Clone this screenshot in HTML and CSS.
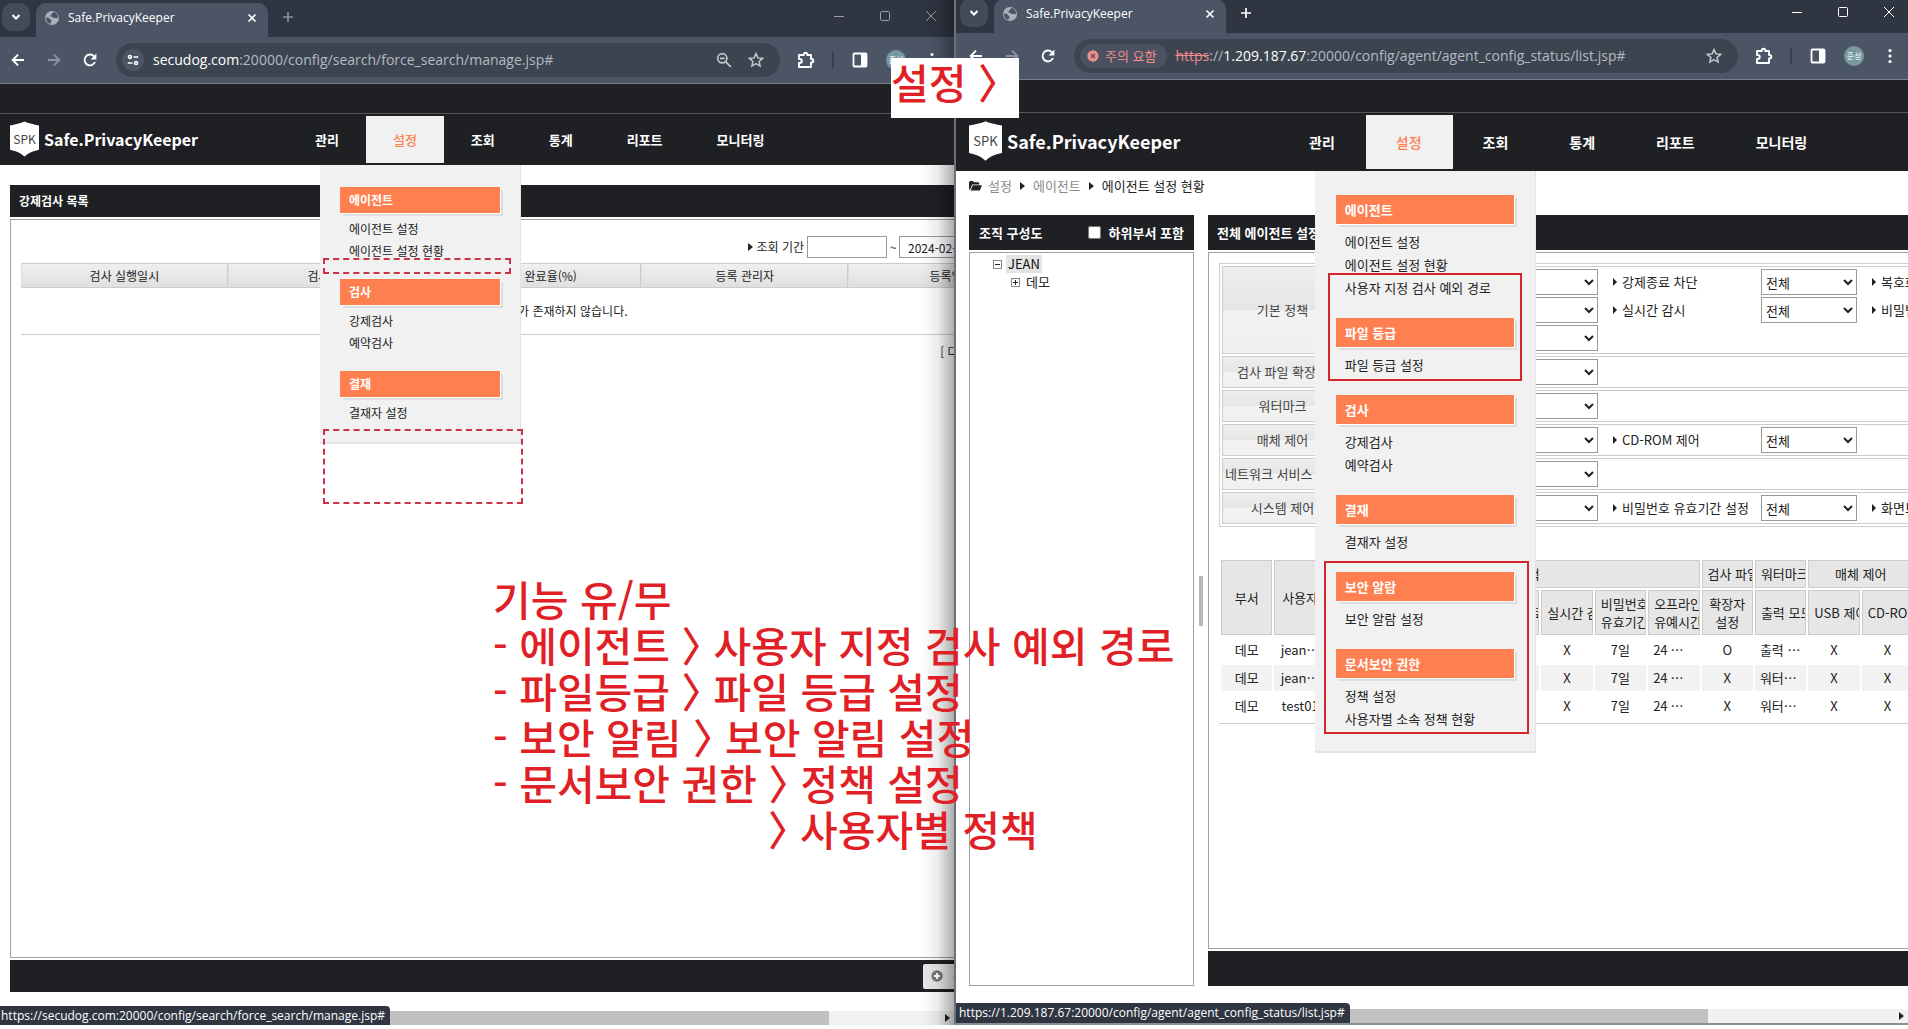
FILE: index.html
```html
<!DOCTYPE html>
<html lang="ko">
<head>
<meta charset="utf-8">
<title>Safe.PrivacyKeeper</title>
<link rel="stylesheet" href="styles.css">
</head>
<body>
<svg class="sprite" aria-hidden="true">
  <symbol id="chev" viewBox="0 0 16 16"><path d="M4.500 6l3.500 3.500L11.500 6" fill="none" stroke="currentColor" stroke-width="2"/></symbol>
  <symbol id="globe" viewBox="0 0 16 16"><circle cx="8" cy="8" r="7" fill="#aab0b9"/><path d="M2.500 7.500c1.500 0 3 .5 3.500 1.500s1.500 1 1.500 2S6 13 6.500 14C3.500 13.500 2 11 2 8.500zM8.500 3c-1 .5-.5 1.500-1.500 2s-1.500 1-.5 1.500 2 0 2.500 1 1.500.5 2.500.5 2 .5 2.500-.5c.3-2.500-1.500-5-4-5.500-.5 0-1 .500-1.500 1z" fill="#4c5566"/></symbol>
  <symbol id="close" viewBox="0 0 16 16"><path d="M4.500 4.500l7 7m0-7l-7 7" stroke="currentColor" stroke-width="1.600"/></symbol>
  <symbol id="plus" viewBox="0 0 16 16"><path d="M8 3v10M3 8h10" stroke="currentColor" stroke-width="1.700"/></symbol>
  <symbol id="min" viewBox="0 0 16 16"><path d="M3 8.500h10" stroke="currentColor"/></symbol>
  <symbol id="max" viewBox="0 0 16 16"><rect x="3.500" y="3.500" width="9" height="9" rx="1" fill="none" stroke="currentColor"/></symbol>
  <symbol id="x" viewBox="0 0 16 16"><path d="M3 3l10 10m0-10L3 13" stroke="currentColor"/></symbol>
  <symbol id="back" viewBox="0 0 16 16"><path d="M14 8H3m5-5.300L2.700 8 8 13.300" fill="none" stroke="currentColor" stroke-width="1.900"/></symbol>
  <symbol id="fwd" viewBox="0 0 16 16"><path d="M2 8h11M8 2.700L13.300 8 8 13.300" fill="none" stroke="currentColor" stroke-width="1.900"/></symbol>
  <symbol id="reload" viewBox="0 0 16 16"><path d="M13 10A5.400 5.400 0 1 1 12 4.300L13.500 6" fill="none" stroke="currentColor" stroke-width="1.900"/><path d="M14.400 1.500v6H8.500z" fill="currentColor"/></symbol>
  <symbol id="tune" viewBox="0 0 16 16"><g fill="none" stroke="currentColor" stroke-width="1.700"><circle cx="4.500" cy="4.500" r="1.700"/><path d="M8.500 4.500H14M2 11.500h5.500"/><circle cx="11.500" cy="11.500" r="1.700"/></g></symbol>
  <symbol id="zoomout" viewBox="0 0 16 16"><g fill="none" stroke="currentColor" stroke-width="1.700"><circle cx="6.300" cy="6.300" r="4.600"/><path d="M9.800 9.800l5 5M4 6.300h4.600"/></g></symbol>
  <symbol id="star" viewBox="0 0 16 16"><path d="M8 1.600l1.900 4.300 4.700.5-3.500 3.100 1 4.600L8 11.700l-4.100 2.400 1-4.600L1.400 6.400l4.700-.5z" fill="none" stroke="currentColor" stroke-width="1.500"/></symbol>
  <symbol id="puzzle" viewBox="0 0 18 18"><path d="M2 4h4.800v-.6a1.700 1.700 0 0 1 3.400 0V4H14v4h.6a1.700 1.700 0 0 1 0 3.400H14V16H2v-4h.8a2 2 0 0 0 0-4H2z" fill="none" stroke="currentColor" stroke-width="1.900" stroke-linejoin="round"/></symbol>
  <symbol id="side" viewBox="0 0 16 16"><rect x="1.500" y="1.500" width="13" height="13" rx="1" fill="none" stroke="currentColor" stroke-width="1.800"/><path d="M9 1h6v14H9z" fill="currentColor"/></symbol>
  <symbol id="dots" viewBox="0 0 16 16"><g fill="currentColor"><circle cx="8" cy="2.500" r="1.600"/><circle cx="8" cy="8" r="1.600"/><circle cx="8" cy="13.500" r="1.600"/></g></symbol>
  <symbol id="warn" viewBox="0 0 12 12"><circle cx="6" cy="6" r="5.700" fill="#f28b8f"/><path d="M4 4l4 4m0-4L4 8" stroke="#4a5160" stroke-width="1.300"/></symbol>
  <symbol id="shield" viewBox="0 0 30 36"><path d="M15 0c4 2 10 3 15 4v25c-5 1-11 3-15 7-4-4-10-6-15-7V4c5-1 11-2 15-4z" fill="#fff"/></symbol>
  <symbol id="tri" viewBox="0 0 5 8"><path d="M0 0l5 4-5 4z" fill="currentColor"/></symbol>
  <symbol id="folder" viewBox="0 0 13 10"><path d="M0 8.500V1.200L1 0h3l1 1.300h4.500l.8 1V3.500H3.200L1 8.500zM3.800 4.200H13L10.800 9.500H1.500z" fill="currentColor"/></symbol>
  <symbol id="add" viewBox="0 0 12 12"><circle cx="6" cy="6" r="5.700" fill="#777"/><path d="M6 3v6M3 6h6" stroke="#fff" stroke-width="2"/></symbol>
</svg>

<div class="desktop">
<!-- Background window -->
<section class="window back-window">
  <div class="titlebar">
    <button class="tab-search" aria-label="탭 검색"><svg><use href="#chev"/></svg></button>
    <div class="tab"><svg><use href="#globe"/></svg><span class="tab-title">Safe.PrivacyKeeper</span><button class="icon-btn small" aria-label="탭 닫기"><svg><use href="#close"/></svg></button></div>
    <button class="icon-btn new-tab" aria-label="새 탭"><svg><use href="#plus"/></svg></button>
    <div class="controls"><svg><use href="#min"/></svg><svg><use href="#max"/></svg><svg><use href="#x"/></svg></div>
  </div>
  <div class="toolbar">
    <button class="icon-btn" aria-label="뒤로"><svg><use href="#back"/></svg></button>
    <button class="icon-btn off" aria-label="앞으로"><svg><use href="#fwd"/></svg></button>
    <button class="icon-btn" aria-label="새로고침"><svg><use href="#reload"/></svg></button>
    <div class="omnibox">
      <span class="site-info"><svg><use href="#tune"/></svg></span>
      <span class="url"><b>secudog.com</b>:20000/config/search/force_search/manage.jsp#</span>
      <button class="icon-btn small" aria-label="축소"><svg><use href="#zoomout"/></svg></button>
      <button class="icon-btn small" aria-label="북마크"><svg><use href="#star"/></svg></button>
    </div>
    <button class="icon-btn big" aria-label="확장 프로그램"><svg><use href="#puzzle"/></svg></button>
    <i class="divider"></i>
    <button class="icon-btn" aria-label="측면 패널"><svg><use href="#side"/></svg></button>
    <button class="icon-btn" aria-label="프로필"><span class="avatar">준성</span></button>
    <button class="icon-btn" aria-label="메뉴"><svg><use href="#dots"/></svg></button>
  </div>
  <div class="topline"></div>
  <header class="site-head">
    <a class="logo" href="#"><span class="shield"><svg><use href="#shield"/></svg><span>SPK</span></span><span>Safe.PrivacyKeeper</span></a>
    <nav><ul class="nav">
      <li><a href="#">관리</a></li>
      <li class="active"><a href="#">설정</a>
        <div class="menu">
          <h3>에이전트</h3><a href="#">에이전트 설정</a><a href="#">에이전트 설정 현황</a>
          <h3>검사</h3><a href="#">강제검사</a><a href="#">예약검사</a>
          <h3>결재</h3><a href="#">결재자 설정</a>
        </div>
      </li>
      <li><a href="#">조회</a></li><li><a href="#">통계</a></li><li><a href="#">리포트</a></li><li><a href="#">모니터링</a></li>
    </ul></nav>
  </header>
  <main class="scan-page">
    <h2 class="bar">강제검사 목록</h2>
    <div class="panel scan-panel">
      <form class="search">
        <svg class="tri"><use href="#tri"/></svg><label for="from">조회 기간</label>
        <input id="from" type="text"><span>~</span><input type="text" value="2024-02-21" aria-label="종료일">
        <button type="button">조회</button>
      </form>
      <table class="scan-table">
        <thead><tr><th>검사 실행일시</th><th>검사 이름</th><th>검사 완료율(%)</th><th>등록 관리자</th><th>등록일시</th></tr></thead>
        <tbody><tr><td colspan="5">조회된 데이터가 존재하지 않습니다.</td></tr></tbody>
      </table>
      <p class="export">[ 다운로드 가능 건수 ]</p>
    </div>
    <div class="bar foot"><button class="add-btn"><svg><use href="#add"/></svg>신규 등록</button></div>
  </main>
  <div class="hscroll"><i class="thumb"></i><svg class="tri"><use href="#tri"/></svg></div>
  <div class="status">https://secudog.com:20000/config/search/force_search/manage.jsp#</div>
</section>

<!-- Foreground window -->
<section class="window front-window">
  <div class="titlebar">
    <button class="tab-search" aria-label="탭 검색"><svg><use href="#chev"/></svg></button>
    <div class="tab"><svg><use href="#globe"/></svg><span class="tab-title">Safe.PrivacyKeeper</span><button class="icon-btn small" aria-label="탭 닫기"><svg><use href="#close"/></svg></button></div>
    <button class="icon-btn new-tab" aria-label="새 탭"><svg><use href="#plus"/></svg></button>
    <div class="controls"><svg><use href="#min"/></svg><svg><use href="#max"/></svg><svg><use href="#x"/></svg></div>
  </div>
  <div class="toolbar">
    <button class="icon-btn" aria-label="뒤로"><svg><use href="#back"/></svg></button>
    <button class="icon-btn off" aria-label="앞으로"><svg><use href="#fwd"/></svg></button>
    <button class="icon-btn" aria-label="새로고침"><svg><use href="#reload"/></svg></button>
    <div class="omnibox">
      <span class="warning"><svg><use href="#warn"/></svg>주의 요함</span>
      <span class="url"><s>https</s>://<b>1.209.187.67</b>:20000/config/agent/agent_config_status/list.jsp#</span>
      <button class="icon-btn small" aria-label="북마크"><svg><use href="#star"/></svg></button>
    </div>
    <button class="icon-btn big" aria-label="확장 프로그램"><svg><use href="#puzzle"/></svg></button>
    <i class="divider"></i>
    <button class="icon-btn" aria-label="측면 패널"><svg><use href="#side"/></svg></button>
    <button class="icon-btn" aria-label="프로필"><span class="avatar">준성</span></button>
    <button class="icon-btn" aria-label="메뉴"><svg><use href="#dots"/></svg></button>
  </div>
  <div class="topline"></div>
  <header class="site-head">
    <a class="logo" href="#"><span class="shield"><svg><use href="#shield"/></svg><span>SPK</span></span><span>Safe.PrivacyKeeper</span></a>
    <nav><ul class="nav">
      <li><a href="#">관리</a></li>
      <li class="active"><a href="#">설정</a>
        <div class="menu">
          <h3>에이전트</h3><a href="#">에이전트 설정</a><a href="#">에이전트 설정 현황</a><a href="#">사용자 지정 검사 예외 경로</a>
          <h3>파일 등급</h3><a href="#">파일 등급 설정</a>
          <h3>검사</h3><a href="#">강제검사</a><a href="#">예약검사</a>
          <h3>결재</h3><a href="#">결재자 설정</a>
          <h3>보안 알람</h3><a href="#">보안 알람 설정</a>
          <h3>문서보안 권한</h3><a href="#">정책 설정</a><a href="#">사용자별 소속 정책 현황</a>
        </div>
      </li>
      <li><a href="#">조회</a></li><li><a href="#">통계</a></li><li><a href="#">리포트</a></li><li><a href="#">모니터링</a></li>
    </ul></nav>
  </header>
  <div class="crumbs"><svg class="folder"><use href="#folder"/></svg><a href="#">설정</a><svg class="tri"><use href="#tri"/></svg><a href="#">에이전트</a><svg class="tri"><use href="#tri"/></svg><span>에이전트 설정 현황</span></div>
  <main class="agent-page">
    <aside class="org">
      <div class="bar"><span>조직 구성도</span><label><input type="checkbox">하위부서 포함</label></div>
      <div class="panel tree">
        <div class="node"><i class="box"></i><span class="picked">JEAN</span></div>
        <div class="node child"><i class="box more"></i><span>데모</span></div>
      </div>
    </aside>
    <div class="splitter"><i></i></div>
    <section class="status-list">
      <h2 class="bar">전체 에이전트 설정 현황</h2>
      <div class="panel list-panel">
        <div class="filters">
          <div class="frow"><div class="fname">기본 정책</div><div class="fields">
            <label for="f1">삭제 차단</label><select id="f1"><option>전체</option></select>
            <label for="f2">강제종료 차단</label><select id="f2"><option>전체</option></select>
            <label for="f3">복호화 권한</label><select id="f3"><option>전체</option></select>
            <label for="f4">자동 검사</label><select id="f4"><option>전체</option></select>
            <label for="f5">실시간 감시</label><select id="f5"><option>전체</option></select>
            <label for="f6">비밀번호</label><select id="f6"><option>전체</option></select>
            <label for="f7">오프라인</label><select id="f7"><option>전체</option></select>
          </div></div>
          <div class="frow"><div class="fname">검사 파일 확장자</div><div class="fields"><label for="f8">확장자</label><select id="f8"><option>전체</option></select></div></div>
          <div class="frow"><div class="fname">워터마크</div><div class="fields"><label for="f9">출력 모드</label><select id="f9"><option>전체</option></select></div></div>
          <div class="frow"><div class="fname">매체 제어</div><div class="fields"><label for="f10">USB 제어</label><select id="f10"><option>전체</option></select><label for="f11">CD-ROM 제어</label><select id="f11"><option>전체</option></select></div></div>
          <div class="frow"><div class="fname">네트워크 서비스 제어</div><div class="fields"><label for="f12">서비스</label><select id="f12"><option>전체</option></select></div></div>
          <div class="frow"><div class="fname">시스템 제어</div><div class="fields"><label for="f13">시스템</label><select id="f13"><option>전체</option></select><label for="f14">비밀번호 유효기간 설정</label><select id="f14"><option>전체</option></select><label for="f15">화면보호기</label><select id="f15"><option>전체</option></select></div></div>
        </div>
        <table class="agents">
          <thead>
            <tr><th rowspan="2">부서</th><th rowspan="2">사용자</th><th colspan="7">기본 정책</th><th>검사 파일</th><th>워터마크</th><th colspan="2">매체 제어</th><th colspan="2">서비스</th></tr>
            <tr><th>검사</th><th>삭제</th><th>복호화</th><th>강제종료</th><th>실시간 감시</th><th>비밀번호<br>유효기간</th><th>오프라인<br>유예시간</th><th>확장자<br>설정</th><th>출력 모드</th><th>USB 제어</th><th>CD-ROM</th><th>공유</th><th>원격</th></tr>
          </thead>
          <tbody>
            <tr><td>데모</td><td>jean…</td><td>X</td><td>X</td><td>X</td><td>X</td><td>X</td><td>7일</td><td class="l">24 …</td><td>O</td><td class="l">출력 …</td><td>X</td><td>X</td><td>X</td><td>X</td></tr>
            <tr><td>데모</td><td>jean…</td><td>X</td><td>X</td><td>X</td><td>X</td><td>X</td><td>7일</td><td class="l">24 …</td><td>X</td><td class="l">워터…</td><td>X</td><td>X</td><td>X</td><td>X</td></tr>
            <tr><td>데모</td><td>test01</td><td>X</td><td>X</td><td>X</td><td>X</td><td>X</td><td>7일</td><td class="l">24 …</td><td>X</td><td class="l">워터…</td><td>X</td><td>X</td><td>X</td><td>X</td></tr>
          </tbody>
        </table>
      </div>
      <div class="bar foot"></div>
    </section>
  </main>
  <div class="hscroll"><i class="thumb"></i><svg class="tri"><use href="#tri"/></svg></div>
  <div class="status">https://1.209.187.67:20000/config/agent/agent_config_status/list.jsp#</div>
</section>

<!-- Review notes drawn over the two windows -->
<i class="mark dashed gap-agent"></i>
<i class="mark dashed gap-end"></i>
<i class="mark added-top"></i>
<i class="mark added-end"></i>
<div class="note note-title">설정 <span class="gt">〉</span></div>
<div class="note note-list">
  <p>기능 유/무</p>
  <p>- 에이전트 <span class="gt">〉</span> 사용자 지정 검사 예외 경로</p>
  <p>- 파일등급 <span class="gt">〉</span> 파일 등급 설정</p>
  <p>- 보안 알림 <span class="gt">〉</span> 보안 알림 설정</p>
  <p>- 문서보안 권한 <span class="gt">〉</span> 정책 설정</p>
  <p class="indent"><span class="gt">〉</span> 사용자별 정책</p>
</div>
</div>
</body>
</html>
```
FILE: styles.css
```css
* { box-sizing: border-box; }
body {
  margin: 0;
  background: #fff;
  color: #222;
  font-family: "Noto Sans CJK KR", sans-serif;
}
h2, h3, p, ul { margin: 0; padding: 0; }
a { color: inherit; text-decoration: none; }
button, input, select { font: inherit; color: inherit; }
button { border: 0; padding: 0; background: none; }
svg { display: block; width: 16px; height: 16px; flex: none; }
.sprite { position: absolute; width: 0; height: 0; }
.tri { width: 5px; height: 8px; color: #222; }

.desktop {
  position: relative;
  display: grid;
  grid-template-columns: minmax(0, 1fr) minmax(0, 1fr);
  height: 100vh;
  min-height: 860px;
  padding-bottom: 4px;
  overflow: hidden;
}
.window {
  position: relative;
  display: flex;
  flex-direction: column;
  overflow: hidden;
  background: #fff;
  font-size: var(--fs);
  line-height: 18px;
}
.back-window {
  --fs: 12px; --title-h: 37px; --pad: 2px; --top-h: 30px; --head-h: 51px; --nav-pad: 27px; --nav-fs: 13px;
  --logo-fs: 16px; --menu-x: -46px; --menu-w: 201px; --h3-h: 26px; --item-h: 22px; --side: 10px; --bar-h: 32px; --end: 87%;
}
.back-window::after {
  content: "";
  position: absolute;
  top: 0; right: 0; bottom: 0;
  width: 32px;
  background: linear-gradient(to right, transparent, rgba(0, 0, 0, .08) 50%, rgba(0, 0, 0, .32));
}
.front-window {
  --fs: 13px; --title-h: 33px; --pad: 4px; --top-h: 33px; --head-h: 58px; --nav-pad: 30px; --nav-fs: 14px;
  --logo-fs: 18px; --menu-x: -51px; --menu-w: 221px; --h3-h: 29px; --item-h: 23px; --side: 13px; --bar-h: 35px; --end: 79%;
  border-left: 2px solid #6c717a;
  border-bottom: 2px solid #8b8e94;
}

/* Browser frame */
.titlebar { display: flex; align-items: flex-end; height: var(--title-h); padding-left: var(--pad); background: #2f3541; overflow: hidden; flex: none; }
.tab-search { display: grid; place-items: center; width: 28px; height: 28px; margin: 0 6px 6px 0; border-radius: 10px; background: #434a58; color: #fff; }
.tab { display: flex; align-items: center; gap: 8px; width: 232px; height: 34px; padding: 0 0 5px 8px; border-radius: 10px 10px 0 0; background: #4c5566; color: #fff; font: 12px/18px "Open Sans", "Noto Sans CJK KR", sans-serif; }
.tab-title { flex: 1; padding-top: 1px; }
.icon-btn { display: grid; place-items: center; width: 36px; height: 32px; color: #fff; }
.icon-btn.small { width: 32px; }
.new-tab { height: 28px; margin: 0 0 6px 2px; }
.back-window .new-tab { color: #8a909b; }
.controls { display: flex; gap: 30px; margin-left: auto; padding: 0 15px 13px; color: #fff; }
.back-window .controls { color: #9a9ea6; }
.front-window .controls { padding-right: 11px; }
.toolbar { display: flex; align-items: center; height: 47px; padding: 0 4px 0 0; border-bottom: 1px solid #75808f; background: #4c5566; flex: none; }
.front-window .toolbar { padding: 0 0 0 2px; }
.icon-btn.off { color: #8c93a0; }
.icon-btn.big svg { width: 18px; height: 18px; }
.omnibox { display: flex; align-items: center; flex: 1; min-width: 0; height: 34px; margin: 0 8px; padding: 0 8px 0 6px; border-radius: 17px; background: #3c4450; }
.omnibox .icon-btn { color: #c3c7ce; }
.site-info { display: grid; place-items: center; width: 22px; height: 22px; margin-right: 9px; border-radius: 50%; background: #4c5566; color: #fff; }
.site-info svg { width: 14px; height: 14px; }
.url { flex: 1; overflow: hidden; white-space: nowrap; font: 14px/20px "Open Sans", sans-serif; color: #b4bac4; }
.url b { font-weight: 400; color: #fff; }
.url s { color: #f28b8f; }
.warning { display: flex; align-items: center; gap: 6px; height: 24px; margin-right: 8px; padding: 0 11px 0 7px; border-radius: 12px; background: #4a5160; color: #f28b8f; font-size: 13px; }
.warning svg { width: 12px; height: 12px; }
.divider { width: 2px; height: 16px; margin: 0 8px; background: #39404c; }
.avatar { display: grid; place-items: center; width: 20px; height: 20px; border-radius: 50%; background: #7898a0; font-size: 8px; line-height: 10px; }

/* Site header */
.topline { height: var(--top-h); border-bottom: 1px solid #55565a; background: #1f2024; flex: none; }
.site-head { position: relative; z-index: 2; display: flex; height: var(--head-h); padding: 2px 0; background: #1f2024; flex: none; }
.logo { display: flex; align-items: center; gap: 5px; width: 288px; padding: 0 0 2px var(--side); color: #fff; font-weight: 700; font-size: var(--logo-fs); }
.front-window .logo { width: 323px; }
.shield { display: grid; place-items: center; }
.shield > * { grid-area: 1 / 1; }
.shield svg { width: 29px; height: 36px; }
.shield span { color: #44454a; font-size: 12px; font-weight: 400; }
.front-window .shield svg { width: 33px; height: 40px; }
.front-window .shield span { font-size: 13px; }
.nav { display: flex; height: 100%; list-style: none; color: #fff; font-size: var(--nav-fs); font-weight: 700; }
.nav li { position: relative; }
.nav > li > a { display: flex; align-items: center; height: 100%; padding: 0 var(--nav-pad); white-space: nowrap; }
.front-window .nav > li > a { padding-right: 31px; }
.nav .active > a { background: #f1f1f1; color: #ff7f50; font-weight: 500; }
.menu {
  position: absolute;
  top: calc(100% + 2px);
  left: var(--menu-x);
  width: var(--menu-w);
  padding: 22px 20px 2px;
  border: solid #e4e4e4;
  border-width: 0 1px 2px 0;
  background: #f1f1f1;
  color: #222;
  font-size: var(--fs);
  font-weight: 400;
}
.menu h3 { height: var(--h3-h); margin-bottom: 5px; padding-left: 9px; background: #ff7f50; box-shadow: 1px 1px #fff, 3px 3px #dedede; color: #fff; font-size: var(--fs); line-height: var(--h3-h); }
.menu a { display: block; height: var(--item-h); padding-left: 9px; line-height: var(--item-h); white-space: nowrap; }
.menu a + h3 { margin-top: 17px; }
.menu::after { content: ""; display: block; height: 16px; }
.front-window .menu { padding: 24px 21px 2px; }
.front-window .menu h3 { margin-bottom: 6px; }
.front-window .menu a + h3 { margin-top: 19px; }
.front-window .menu::after { height: 19px; }

/* Shared page parts */
.bar { display: flex; align-items: center; height: var(--bar-h); padding: 0 9px; background: #1f2024; color: #fff; font-size: var(--fs); font-weight: 700; white-space: nowrap; flex: none; }
.panel { flex: 1; min-height: 0; margin: 2px 0; border: 1px solid #a0a0a0; overflow: hidden; }
.hscroll { display: flex; align-items: center; height: 14px; padding: 0 4px 0 17px; background: #f1f1f1; flex: none; }
.thumb { width: var(--end); height: 100%; background: #c1c1c1; }
.hscroll .tri { margin-left: auto; }
.status { position: absolute; left: 0; bottom: 0; height: 19px; padding: 0 5px 0 1px; border-radius: 0 4px 0 0; background: #2f3541; color: #fff; font: 12px/19px "Open Sans", sans-serif; white-space: nowrap; }
.front-window .status { height: 20px; padding-left: 3px; }

/* Forced scan list */
.scan-page { display: flex; flex-direction: column; flex: 1; min-width: 1056px; min-height: 0; margin: 20px 0 19px 10px; align-self: flex-start; }
.scan-panel { padding: 16px 10px; }
.search { display: flex; align-items: center; justify-content: flex-end; gap: 5px; height: 22px; margin-bottom: 5px; }
.search input { width: 80px; height: 22px; padding: 0 8px; border: 1px solid #999; }
.search label { margin-right: -2px; }
.search span { width: 6px; margin: 0 -2px; }
.search button { width: 71px; height: 22px; background: #e4e4e4; }
.search .tri { margin-right: -2px; }
.scan-table { width: 100%; table-layout: fixed; border-collapse: separate; border-spacing: 0; }
.scan-table th { height: 25px; padding: 0; border: 1px solid #ccc; border-left-color: #ddd; background: linear-gradient(#efefef, #e0e0e0); font-weight: 400; }
.scan-table td { height: 47px; border-bottom: 1px solid #ccc; padding: 0; text-align: center; }
.export { padding: 8px 5px 0 0; text-align: right; }
.scan-page .foot { padding-left: 913px; }
.add-btn { display: flex; align-items: center; gap: 10px; height: 25px; padding: 0 8px; border-radius: 2px; background: #e9e9e9; color: #333; }
.add-btn svg { width: 12px; height: 12px; }

/* Agent settings status */
.crumbs { display: flex; align-items: center; gap: 8px; height: 30px; padding-left: 13px; flex: none; }
.crumbs .folder { width: 13px; height: 10px; margin-right: -2px; color: #222; }
.crumbs a { color: #8a8a8a; }
.agent-page { display: flex; flex: 1; min-height: 0; margin: 14px 0 23px 13px; }
.org, .status-list { display: flex; flex-direction: column; }
.org { width: 225px; flex: none; }
.org .bar { justify-content: space-between; padding: 0 10px; }
.org label { display: flex; align-items: center; gap: 8px; }
.org input { width: 13px; height: 13px; margin: 0; }
.org .panel { margin-bottom: 0; }
.tree { padding: 2px 23px; }
.node { display: flex; align-items: center; gap: 4px; height: 18px; }
.node span { padding: 0 2px; line-height: 18px; }
.node .picked { background: #e4e4e4; color: #111; }
.child { padding-left: 18px; }
.box { position: relative; width: 9px; height: 9px; border: 1px solid #888; background: linear-gradient(#222, #222) center / 5px 1px no-repeat; }
.more { background: linear-gradient(#222, #222) center / 5px 1px no-repeat, linear-gradient(#222, #222) center / 1px 5px no-repeat; }
.splitter { display: grid; place-items: center; width: 14px; flex: none; }
.splitter i { width: 4px; height: 50px; background: #b8b8b8; }
.status-list { flex: 1; min-width: 0; }
.list-panel { padding: 10px; border-right: 0; }
.filters { display: grid; gap: 2px; width: 910px; padding: 2px; border: 1px solid #d0d0d0; }
.frow { display: flex; border: 1px solid #ccc; }
.fname { display: grid; place-items: center; width: 120px; background: linear-gradient(#eee, #e6e6e6 50%, #f2f2f2 50%, #f0f0f0); color: #444; border-right: 1px solid #ccc; flex: none; white-space: nowrap; }
.fields { display: grid; grid-template-columns: repeat(3, 148px 96px 15px); row-gap: 2px; padding: 2px 0 2px 11px; flex: 1; }
.fields label { display: flex; align-items: center; height: 26px; white-space: nowrap; }
.fields label:nth-of-type(3n + 1) { grid-column: 1; }
.fields label:nth-of-type(3n + 2) { grid-column: 4; }
.fields label:nth-of-type(3n) { grid-column: 7; }
.fields label::before { content: ""; margin-right: 5px; border: solid transparent; border-width: 4px 0 4px 4px; border-left-color: #222; }
.fields select { width: 96px; height: 26px; padding: 0; border: 1px solid #999; border-radius: 0; background: #fff; }
.agents { width: 803px; margin: 31px 0 0; table-layout: fixed; border-spacing: 2px; border-bottom: 1px solid #ccc; padding-bottom: 2px; }
.agents th, .agents td { padding: 0; overflow: hidden; text-align: center; white-space: nowrap; }
.agents th { height: 45px; border: 1px solid #ccc; background: #e6e6e6; font-weight: 400; }
.agents thead tr:first-child th { height: 28px; }
.agents tr:nth-child(2) th, .agents th:nth-child(4):not([rowspan]), .agents th:nth-child(5) { padding: 0 0 0 5px; text-align: left; }
.agents tr:nth-child(2) th:nth-child(8) { padding: 0; text-align: center; }
.agents thead tr:first-child th[colspan] { padding: 0; text-align: center; }
.agents td { height: 26px; }
.agents td.l { padding-left: 5px; text-align: left; }
.agents tbody tr:nth-child(2) td { background: #f2f2f2; }

/* Review notes */
.mark { position: absolute; z-index: 4; border: 2px solid #d4252b; }
.dashed { border: 2px dashed #cc3347; }
.gap-agent { left: 323px; top: 258px; width: 188px; height: 16px; }
.gap-end { left: 323px; top: 429px; width: 200px; height: 75px; }
.added-top { left: 1328px; top: 273px; width: 194px; height: 108px; }
.added-end { left: 1324px; top: 561px; width: 205px; height: 173px; }
.note { position: absolute; z-index: 5; color: #e01f26; font-size: 41px; font-weight: 500; line-height: 46px; white-space: nowrap; }
.note-title { left: 891px; top: 58px; width: 128px; height: 60px; background: #fff; }
.note-list { left: 493px; top: 575px; }
.indent { padding-left: 275px; }
.gt { font-feature-settings: "halt"; }
```
